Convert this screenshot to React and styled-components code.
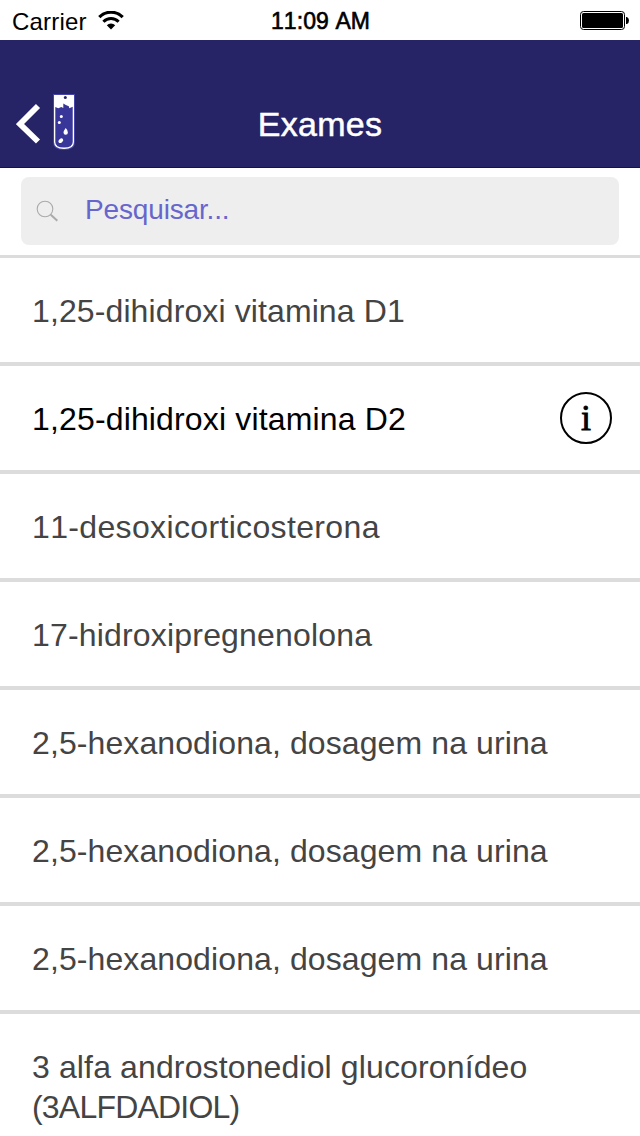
import styled, { createGlobalStyle } from "styled-components"

const GlobalStyle = createGlobalStyle`
  * {
    box-sizing: border-box;
  }

  body {
    margin: 0;
    background: #ffffff;
    font-family: "Liberation Sans", Arial, sans-serif;
    font-kerning: none;
  }
`

const Screen = styled.div`
  width: 640px;
  height: 1136px;
  overflow: hidden;
  background: #ffffff;
`

const StatusBar = styled.div`
  display: grid;
  grid-template-columns: 1fr auto 1fr;
  align-items: center;
  height: 40px;
  padding: 1px 11px 0 12px;
  font-size: 24px;
  line-height: 39px;
  color: #000000;
`

const Network = styled.div`
  display: flex;
  align-items: center;
  gap: 11px;
  letter-spacing: 0.2px;
`

const Clock = styled.div`
  padding-top: 1px;
  font-size: 23px;
  letter-spacing: 0.1px;
  -webkit-text-stroke: 0.6px #000000;
`

const Battery = styled.svg`
  justify-self: end;
`

const Header = styled.header`
  display: grid;
  grid-template-columns: 1fr auto 1fr;
  align-items: center;
  height: 128px;
  padding: 40px 16px 0;
  background: #262466;
  border-bottom: 1px solid #14124a;
  color: #ffffff;
`

const BackButton = styled.button`
  display: flex;
  align-items: center;
  gap: 12px;
  padding: 0;
  border: none;
  background: none;
`

const Title = styled.h1`
  margin: 0;
  padding-top: 2px;
  font-size: 34px;
  font-weight: 400;
  letter-spacing: 0.3px;
  -webkit-text-stroke: 0.5px #ffffff;
`

const SearchBar = styled.div`
  height: 90px;
  padding: 9px 21px 10px;
  border-bottom: 3px solid #dcdcdc;
`

const SearchField = styled.label`
  display: flex;
  align-items: center;
  gap: 26px;
  height: 68px;
  padding: 0 15px;
  border-radius: 8px;
  background: #eeeeee;
`

const SearchInput = styled.input`
  flex: 1;
  padding: 0 0 3px;
  border: none;
  outline: none;
  background: transparent;
  font-family: inherit;
  font-size: 28px;
  letter-spacing: -0.15px;
  color: #6666cc;

  &::placeholder {
    color: #6666cc;
    opacity: 1;
  }
`

const ExamList = styled.ul`
  margin: 0;
  padding: 0;
  list-style: none;
`

const ExamItem = styled.li`
  display: flex;
  align-items: center;
  justify-content: space-between;
  min-height: 108px;
  padding: 33px 28px 31px 32px;
  border-bottom: 4px solid #dcdcdc;
  color: ${(props) => (props.$active ? "#000000" : "#444444")};
`

const ExamName = styled.div`
  font-size: 32px;
  line-height: 40px;
`

const NameLine = styled.div`
  white-space: nowrap;
  letter-spacing: ${(props) => props.$spacing}px;
`

const InfoButton = styled.button`
  display: flex;
  align-items: center;
  justify-content: center;
  width: 52px;
  height: 52px;
  margin: -7px 0 -5px;
  padding: 0;
  border: 2px solid #000000;
  border-radius: 50%;
  background: none;
  font-family: "Liberation Serif", "Times New Roman", serif;
  font-size: 36px;
  line-height: 46px;
  color: #000000;
  -webkit-text-stroke: 0.8px #000000;
`

const exams = [
  { lines: [{ text: "1,25-dihidroxi vitamina D1", spacing: 0.11 }] },
  { lines: [{ text: "1,25-dihidroxi vitamina D2", spacing: 0.15 }], active: true },
  { lines: [{ text: "11-desoxicorticosterona", spacing: 0.35 }] },
  { lines: [{ text: "17-hidroxipregnenolona", spacing: 0.18 }] },
  { lines: [{ text: "2,5-hexanodiona, dosagem na urina", spacing: 0.1 }] },
  { lines: [{ text: "2,5-hexanodiona, dosagem na urina", spacing: 0.1 }] },
  { lines: [{ text: "2,5-hexanodiona, dosagem na urina", spacing: 0.1 }] },
  {
    lines: [
      { text: "3 alfa androstonediol glucoronídeo", spacing: 0.13 },
      { text: "(3ALFDADIOL)", spacing: -0.8 },
    ],
  },
]

const WifiIcon = () => (
  <svg width="26" height="20" viewBox="0 0 26 20" fill="none" stroke="#000000">
    <path d="M1.300 6.100a16.500 16.500 0 0 1 23.400 0" strokeWidth="3.200" />
    <path d="M5.400 10.700a10.700 10.700 0 0 1 15.200 0" strokeWidth="3" />
    <path d="M8.800 14.200a5.800 5.800 0 0 1 8.400 0L13 18.500z" fill="#000000" stroke="none" />
  </svg>
)

const BatteryIcon = () => (
  <Battery width="49" height="20" viewBox="0 0 49 20">
    <rect x="0.5" y="0.5" width="44" height="18" rx="3" fill="none" stroke="#000000" />
    <rect x="2" y="2" width="41" height="15" rx="1.5" fill="#000000" />
    <path d="M46 6h1q2 1 2 3.500t-2 3.500h-1z" fill="#000000" />
  </Battery>
)

const ChevronIcon = () => (
  <svg width="25" height="42" viewBox="0 0 25 42">
    <path d="M22 3 4 21 22 38.500" fill="none" stroke="#ffffff" strokeWidth="5.800" />
  </svg>
)

const TubeIcon = () => (
  <svg width="22" height="60" viewBox="0 0 22 60">
    <path d="M0 0h22v48q0 8-11 8T0 48z" fill="#4644a6" />
    <path d="M1 1h20v47q0 7-10 7T1 48z" fill="#ffffff" />
    <path d="M2.300 13l3 1.200 3-1.200 2 1V9.500l2.500 1.500 3 1.200.500 2 3.400-1.500v35.300q0 5.500-8.700 5.500T2.300 48z" fill="#383698" />
    <circle cx="12.300" cy="3.500" r="1.500" fill="#262466" />
    <circle cx="8.300" cy="22.500" r="1.500" fill="#ffffff" />
    <circle cx="6.300" cy="28.500" r="1.500" fill="#ffffff" />
    <path d="M12.700 34q2.500 2.500 2.200 4.500a2.200 2.200 0 0 1-4.400 0q0-1.500 2.200-4.500z" fill="#ffffff" />
    <ellipse cx="7.800" cy="46.700" rx="2.700" ry="1.900" transform="rotate(-40 7.800 46.700)" fill="#ffffff" />
  </svg>
)

const SearchIcon = () => (
  <svg width="23" height="23" viewBox="0 0 23 23" fill="none" stroke="#aaaaaa">
    <circle cx="9" cy="9" r="7.800" strokeWidth="1.100" />
    <path d="M14.800 14.800l6.500 6" strokeWidth="2" />
  </svg>
)

const App = () => {
  return (
    <Screen>
      <GlobalStyle />
      <StatusBar>
        <Network>
          Carrier
          <WifiIcon />
        </Network>
        <Clock>11:09 AM</Clock>
        <BatteryIcon />
      </StatusBar>
      <Header>
        <BackButton aria-label="Voltar">
          <ChevronIcon />
          <TubeIcon />
        </BackButton>
        <Title>Exames</Title>
      </Header>
      <SearchBar>
        <SearchField>
          <SearchIcon />
          <SearchInput placeholder="Pesquisar..." />
        </SearchField>
      </SearchBar>
      <ExamList>
        {exams.map((exam, index) => (
          <ExamItem key={index} $active={exam.active}>
            <ExamName>
              {exam.lines.map((line) => (
                <NameLine key={line.text} $spacing={line.spacing}>
                  {line.text}
                </NameLine>
              ))}
            </ExamName>
            {exam.active && <InfoButton>i</InfoButton>}
          </ExamItem>
        ))}
      </ExamList>
    </Screen>
  )
}

export default App
